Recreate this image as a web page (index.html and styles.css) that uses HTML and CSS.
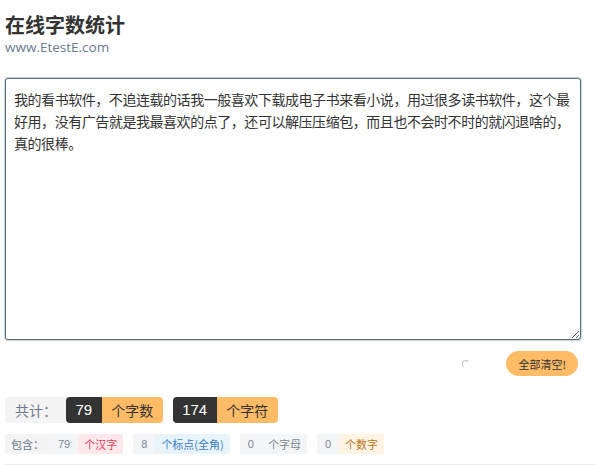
FILE: index.html
```html
<!DOCTYPE html>
<html lang="zh-CN">
    <head>
        <meta charset="UTF-8" />
        <title>在线字数统计</title>
        <link rel="stylesheet" href="styles.css">
    </head>
    <body>
        <div class="container">
            <h1>在线字数统计</h1>
            <div class="site">www.EtestE.com</div>

            <textarea class="editor" id="content">我的看书软件，不追连载的话我一般喜欢下载成电子书来看小说，用过很多读书软件，这个最好用，没有广告就是我最喜欢的点了，还可以解压压缩包，而且也不会时不时的就闪退啥的，真的很棒。</textarea>

            <div class="actions">
                <span class="spinner"></span>
                <button class="clear-btn">全部清空!</button>
            </div>

            <div class="total">
                <span class="tag label">共计：</span>
                <span class="group">
                    <span class="tag num-dark">79</span>
                    <span class="tag unit-orange">个字数</span>
                </span>
                <span class="group">
                    <span class="tag num-dark">174</span>
                    <span class="tag unit-orange">个字符</span>
                </span>
            </div>

            <div class="detail">
                <span class="chip label">包含：</span>
                <span class="group">
                    <span class="chip num">79</span>
                    <span class="chip unit red">个汉字</span>
                </span>
                <span class="group">
                    <span class="chip num">8</span>
                    <span class="chip unit blue">个标点(全角)</span>
                </span>
                <span class="group">
                    <span class="chip num">0</span>
                    <span class="chip unit gray">个字母</span>
                </span>
                <span class="group">
                    <span class="chip num">0</span>
                    <span class="chip unit yellow">个数字</span>
                </span>
            </div>

            <hr class="divider" />
        </div>
    </body>
</html>
```

FILE: styles.css
```css
body {
    margin: 0;
    font-family: "Noto Sans CJK SC", "Liberation Sans", sans-serif;
    color: #333;
    background: #fff;
}
.container {
    padding: 0 5px;
}
h1 {
    margin: 12px 0 0;
    font-size: 20px;
    line-height: 26px;
    font-weight: bold;
    color: #333;
}
.site {
    font-family: "Open Sans", "Liberation Sans", sans-serif;
    font-size: 13.5px;
    line-height: 18px;
    color: #6b7a93;
}
.editor {
    display: block;
    box-sizing: border-box;
    width: 576px;
    height: 262px;
    margin: 22px 0 0;
    padding: 9px 4px 9px 8px;
    border: 1px solid #55707c;
    border-radius: 3px;
    box-shadow: 0 0 0 1px rgba(85, 112, 124, 0.3);
    font-family: "Noto Sans CJK SC", sans-serif;
    font-size: 14px;
    line-height: 22px;
    letter-spacing: -0.45px;
    color: #333;
    outline: none;
}
.actions {
    display: flex;
    justify-content: flex-end;
    align-items: center;
    gap: 36px;
    margin-top: 11px;
    padding-right: 17px;
}
.spinner {
    width: 8px;
    height: 8px;
    box-sizing: border-box;
    border: 1.5px solid transparent;
    border-left-color: #c4c4c4;
    border-top-color: #c4c4c4;
    border-radius: 50%;
}
.clear-btn {
    height: 25px;
    padding: 0 12px;
    border: none;
    border-radius: 13px;
    background: #ffbb66;
    color: #333;
    font-family: "Noto Sans CJK SC", sans-serif;
    font-size: 11px;
    cursor: pointer;
}
.total,
.detail {
    display: flex;
}
.total {
    margin-top: 21px;
}
.detail {
    margin-top: 11px;
}
.group {
    display: flex;
    margin-right: 10px;
}
.tag {
    height: 26px;
    line-height: 26px;
    padding: 0 9.5px;
    font-size: 14px;
    border-radius: 4px;
}
.tag.label {
    padding: 0 9px 0 10px;
    background: #f4f4f5;
    color: #6b7a8f;
    border-radius: 4px 0 0 4px;
}
.num-dark {
    background: #333;
    color: #fff;
    font-family: "Liberation Sans", sans-serif;
    font-size: 15px;
    border-radius: 4px 0 0 4px;
}
.unit-orange {
    background: #ffbb66;
    color: #333;
    border-radius: 0 4px 4px 0;
}
.chip {
    height: 20px;
    line-height: 20px;
    padding: 0 6px;
    font-size: 11px;
    border-radius: 3px;
}
.chip.label {
    background: #f4f4f5;
    color: #6b7a8f;
    border-radius: 3px 0 0 3px;
}
.chip.num {
    padding: 0 8px;
    background: #f4f5f7;
    color: #7b8797;
    font-family: "Liberation Sans", sans-serif;
    border-radius: 3px 0 0 3px;
}
.chip.unit {
    border-radius: 0 3px 3px 0;
}
.red {
    background: #ffe7ec;
    color: #e8445e;
}
.blue {
    background: #e8f3fc;
    color: #3a82c4;
}
.gray {
    background: #f4f5f7;
    color: #7b8797;
}
.yellow {
    background: #fff4e4;
    color: #b9761c;
}
.divider {
    margin: 10px 0 0;
    border: none;
    border-top: 1px solid #ececec;
}
```
